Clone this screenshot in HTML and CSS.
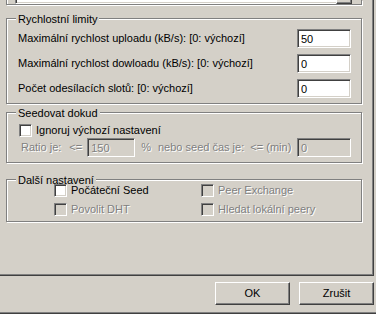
FILE: index.html
```html
<!DOCTYPE html>
<html lang="cs">
<head>
    <meta charset="UTF-8">
    <title>Nastavení torrentu</title>
    <link rel="stylesheet" href="styles.css">
</head>
<body>

    <div class="tab">
        <!-- konec predchozi skupiny (odscrollovano) -->
        <div class="group group-prev">
            <div class="path-field"></div>
            <div class="path-btn"></div>
        </div>

        <div class="group group-limits">
            <div class="group-title">Rychlostní limity</div>
            <div class="field-row">
                <label for="up">Maximální rychlost uploadu (kB/s): [0: výchozí]</label>
                <input type="text" class="edit" id="up" value="50">
            </div>
            <div class="field-row">
                <label for="down">Maximální rychlost dowloadu (kB/s): [0: výchozí]</label>
                <input type="text" class="edit" id="down" value="0">
            </div>
            <div class="field-row last">
                <label for="slots">Počet odesílacích slotů: [0: výchozí]</label>
                <input type="text" class="edit" id="slots" value="0">
            </div>
        </div>

        <div class="group group-seed">
            <div class="group-title">Seedovat dokud</div>
            <label class="check-row">
                <input type="checkbox" class="check">
                <span>Ignoruj výchozí nastavení</span>
            </label>
            <div class="ratio-row">
                <span class="dis ratio-label">Ratio je:</span>
                <span class="dis le">&lt;=</span>
                <input type="text" class="edit edit-ratio" value="150" disabled>
                <span class="dis pct">%</span>
                <span class="dis or">nebo seed čas je:&nbsp; &lt;= (min)</span>
                <input type="text" class="edit" value="0" disabled>
            </div>
        </div>

        <div class="group group-more">
            <div class="group-title">Další nastavení</div>
            <div class="check-grid">
                <label class="check-row">
                    <input type="checkbox" class="check">
                    <span>Počáteční Seed</span>
                </label>
                <label class="check-row">
                    <input type="checkbox" class="check" disabled>
                    <span class="dis">Peer Exchange</span>
                </label>
                <label class="check-row">
                    <input type="checkbox" class="check" disabled>
                    <span class="dis">Povolit DHT</span>
                </label>
                <label class="check-row">
                    <input type="checkbox" class="check" disabled>
                    <span class="dis">Hledat lokální peery</span>
                </label>
            </div>
        </div>
    </div>

    <div class="footer">
        <button class="btn">OK</button>
        <button class="btn">Zrušit</button>
    </div>

</body>
</html>
```

FILE: styles.css
```css
* {
    margin: 0;
    padding: 0;
    box-sizing: border-box;
}

body {
    font-family: "Liberation Sans", Arial, sans-serif;
    font-size: 11px;
    line-height: 13px;
    background-color: #d4d0c8;
    color: #000;
    width: 376px;
    height: 314px;
    overflow: hidden;
}

/* zalozka */
.tab {
    width: 374px;
    height: 276px;
    border-right: 1px solid #404040;
    border-bottom: 1px solid #404040;
    box-shadow: inset -1px -1px #808080;
}

/* ramecek skupiny (etched) */
.group {
    margin: 0 11px 0 6px;
    border: 1px solid #808080;
    box-shadow: inset 1px 1px #fff, 1px 1px #fff;
}

.group-title {
    display: block;
    width: fit-content;
    height: 13px;
    margin: -6px 0 0 9px;
    padding: 0 2px;
    background-color: #d4d0c8;
}

.group-prev {
    display: flex;
    height: 5px;
    border-top: none;
    box-shadow: inset 1px 0 #fff, 1px 1px #fff;
}

.path-field {
    width: 321px;
    height: 4px;
    margin-left: 8px;
    background-color: #fff;
    border-left: 1px solid #808080;
    border-bottom: 1px solid #fff;
    box-shadow: inset 1px 0 #404040, inset 0 -1px #d4d0c8;
}

.path-btn {
    width: 16px;
    height: 4px;
    border-left: 1px solid #fff;
    border-right: 1px solid #404040;
    border-bottom: 1px solid #404040;
    box-shadow: inset -1px -1px #808080;
}

/* Rychlostni limity */
.group-limits {
    margin-top: 13px;
    padding: 0 10px 5px 11px;
}

.group-limits .group-title {
    margin-bottom: 3px;
    margin-left: -2px;
}

.field-row {
    display: flex;
    align-items: center;
    justify-content: space-between;
    height: 19px;
    margin-bottom: 6px;
}

.field-row.last {
    margin-top: 1px;
    margin-bottom: 0;
}

.edit {
    width: 54px;
    height: 19px;
    padding: 0 3px;
    font: inherit;
    color: #000;
    background-color: #fff;
    border: 1px solid;
    border-color: #808080 #fff #fff #808080;
    box-shadow: inset 1px 1px #404040, inset -1px -1px #d4d0c8;
    outline: none;
}

.edit:disabled {
    background-color: #d4d0c8;
    color: #808080;
    text-shadow: 1px 1px 0 #fff;
}

/* Seedovat dokud */
.group-seed {
    margin-top: 8px;
    padding: 0 10px 5px 12px;
}

.group-seed .group-title {
    margin-bottom: 4px;
    margin-left: -3px;
}

.check-row {
    display: flex;
    align-items: center;
    height: 13px;
    gap: 4px;
}

.check {
    appearance: none;
    width: 13px;
    height: 13px;
    flex: none;
    background-color: #fff;
    border: 1px solid;
    border-color: #808080 #fff #fff #808080;
    box-shadow: inset 1px 1px #404040, inset -1px -1px #d4d0c8;
}

.check:disabled {
    background-color: #d4d0c8;
}

.dis {
    color: #808080;
    text-shadow: 1px 1px 0 #fff;
}

.ratio-row {
    display: flex;
    align-items: center;
    height: 19px;
    margin-top: 1px;
}

.ratio-label {
    margin-left: 2px;
}

.le {
    margin-left: 8px;
}

.edit-ratio {
    width: 48px;
    margin-left: 5px;
}

.pct {
    margin-left: 6px;
}

.or {
    margin-left: 7px;
    margin-right: auto;
}

/* Dalsi nastaveni */
.group-more {
    margin-top: 16px;
    padding: 0 10px 5px 47px;
}

.group-more .group-title {
    margin-bottom: -3px;
    margin-left: -38px;
}

.check-grid {
    display: grid;
    grid-template-columns: 147px auto;
    row-gap: 6px;
}

/* tlacitka */
.footer {
    display: flex;
    justify-content: flex-end;
    gap: 9px;
    height: 38px;
    padding: 6px 2px 0 0;
    border-bottom: 1px solid #404040;
    box-shadow: inset 0 -1px #808080;
}

.btn {
    width: 75px;
    height: 23px;
    font: inherit;
    color: #000;
    background-color: #d4d0c8;
    border: 1px solid;
    border-color: #fff #404040 #404040 #fff;
    box-shadow: inset -1px -1px #808080;
}
```
